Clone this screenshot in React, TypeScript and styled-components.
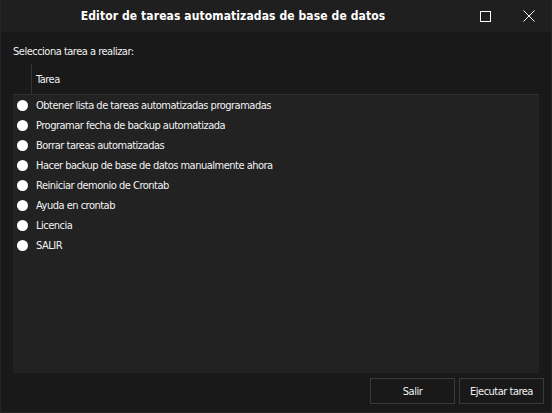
import React from "react";
import styled, { createGlobalStyle } from "styled-components";

const Global = createGlobalStyle`
  html, body { margin: 0; padding: 0; background: #191919; }
  body { font-family: "DejaVu Sans Condensed", "Liberation Sans", sans-serif; }
`;

const Window = styled.div`
  width: 552px;
  height: 413px;
  box-sizing: border-box;
  background: #191919;
  border: 1px solid #242424;
  border-top: none;
  display: flex;
  flex-direction: column;
  color: #ffffff;
  overflow: hidden;
`;

const TitleBar = styled.div`
  height: 32px;
  flex: none;
  display: flex;
  align-items: center;
  background: #1f1f1f;
`;

const Title = styled.div`
  flex: 1;
  text-align: center;
  font-family: "DejaVu Sans Condensed", "Liberation Sans", sans-serif;
  font-weight: bold;
  font-size: 12px;
  letter-spacing: 0.1px;
  padding-left: 2px;
  color: #ffffff;
`;

const Controls = styled.div`
  display: flex;
  align-items: center;
  width: 88px;
  flex: none;
`;

const CtrlButton = styled.div`
  width: 44px;
  height: 32px;
  display: flex;
  align-items: center;
  justify-content: center;
`;

const Body = styled.div`
  flex: 1;
  display: flex;
  flex-direction: column;
  padding: 0 12px;
  min-height: 0;
`;

const Text = `
  font-size: 11px;
  letter-spacing: -0.5px;
`;

const Label = styled.div`
  height: 30px;
  box-sizing: border-box;
  padding-top: 12px;
  line-height: 16px;
  color: #f0f0f0;
  ${Text}
`;

const Table = styled.div`
  height: 311px;
  display: flex;
  flex-direction: column;
`;

const Header = styled.div`
  flex: none;
  display: flex;
  align-items: stretch;
  border-bottom: 1px solid #303030;
  box-sizing: border-box;
  height: 33px;
`;

const HeaderSpacer = styled.div`
  width: 18px;
  border-right: 1px solid #333333;
  margin-top: 2px;
`;

const HeaderCell = styled.div`
  display: flex;
  align-items: center;
  padding-left: 4px;
  padding-top: 2px;
  color: #f0f0f0;
  ${Text}
`;

const Rows = styled.div`
  flex: 1;
  background: #222222;
`;

const Row = styled.div`
  height: 20px;
  display: flex;
  align-items: center;
  color: #f2f2f2;
  ${Text}
`;

const Radio = styled.span`
  width: 11px;
  height: 11px;
  border-radius: 50%;
  background: #ffffff;
  margin-left: 4px;
  margin-right: 8px;
  flex: none;
`;

const Footer = styled.div`
  flex: 1;
  display: flex;
  justify-content: flex-end;
  align-items: flex-start;
  padding-top: 5px;
  margin-right: -5px;
  gap: 4px;
`;

const Button = styled.button`
  width: 85px;
  height: 26px;
  background: #191919;
  border: 1px solid #3a3a3a;
  color: #f2f2f2;
  font-family: inherit;
  padding: 0;
  cursor: pointer;
  ${Text}
`;

const tasks = [
  "Obtener lista de tareas automatizadas programadas",
  "Programar fecha de backup automatizada",
  "Borrar tareas automatizadas",
  "Hacer backup de base de datos manualmente ahora",
  "Reiniciar demonio de Crontab",
  "Ayuda en crontab",
  "Licencia",
  "SALIR",
];

export default function App() {
  return (
    <>
      <Global />
      <Window>
        <TitleBar>
          <Title>Editor de tareas automatizadas de base de datos</Title>
          <Controls>
            <CtrlButton>
              <svg width="11" height="11" viewBox="0 0 11 11">
                <rect x="0.5" y="0.5" width="10" height="10" fill="none" stroke="#fff" strokeWidth="1" />
              </svg>
            </CtrlButton>
            <CtrlButton>
              <svg width="12" height="12" viewBox="0 0 12 12">
                <path d="M0.5 0.5 L11.5 11.5 M11.5 0.5 L0.5 11.5" stroke="#fff" strokeWidth="1" />
              </svg>
            </CtrlButton>
          </Controls>
        </TitleBar>
        <Body>
          <Label>Selecciona tarea a realizar:</Label>
          <Table>
            <Header>
              <HeaderSpacer />
              <HeaderCell>Tarea</HeaderCell>
            </Header>
            <Rows>
              {tasks.map((t) => (
                <Row key={t}>
                  <Radio />
                  {t}
                </Row>
              ))}
            </Rows>
          </Table>
          <Footer>
            <Button>Salir</Button>
            <Button>Ejecutar tarea</Button>
          </Footer>
        </Body>
      </Window>
    </>
  );
}
